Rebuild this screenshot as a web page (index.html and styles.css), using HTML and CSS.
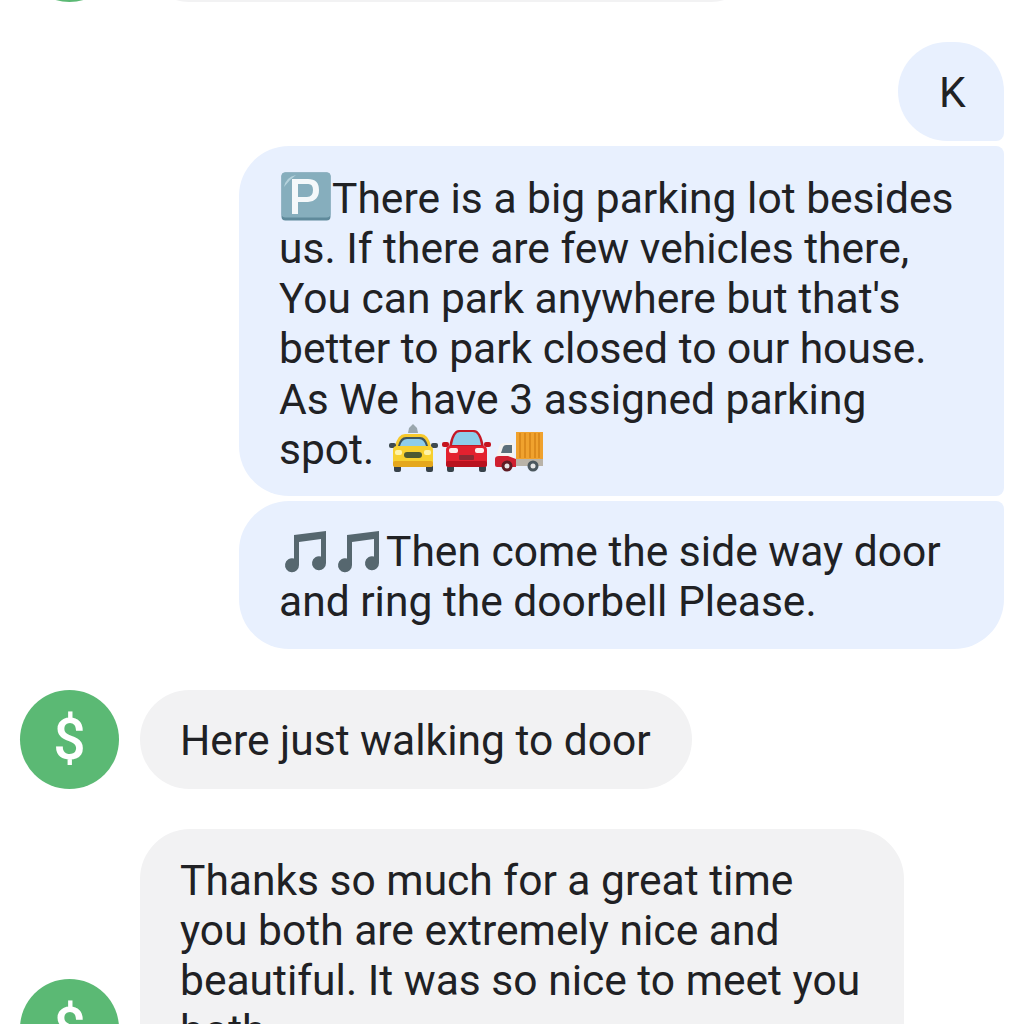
FILE: index.html
```html
<!DOCTYPE html>
<html lang="en">
<head>
<meta charset="utf-8">
<title>Messages</title>
<link rel="stylesheet" href="styles.css">
</head>
<body>
<main class="thread">
  <div class="sliver">
    <div class="row-in">
      <div class="avatar">$</div>
      <div class="bubble in wide">&nbsp;</div>
    </div>
  </div>

  <div class="group out-group">
    <div class="bubble out only">K</div>
    <div class="bubble out first">
      <div class="msg"><svg class="emoji parking" viewBox="0 0 50 50"><rect x="0.5" y="0.5" width="49" height="48" rx="4" fill="#5f8a9b"/><rect x="0.5" y="0.5" width="49" height="45" rx="4" fill="#86aebd"/><path d="M3 15Q5 5 15 3L9 8Z" fill="#b5d2dc"/><path d="M11 42V7H27Q38 7 38 18T27 30H17V42ZM17 12V25H26Q32 25 32 18T26 12Z" fill="#f4f8fa"/></svg>There is a big parking lot besides<br>us. If there are few vehicles there,<br>You can park anywhere but that's<br>better to park closed to our house.<br>As We have 3 assigned parking<br>spot. <svg class="emoji cars" viewBox="0 2 156 44">
        <g>
          <path d="M20 10l1-5 4-4 4 4 1 5z" fill="#9aa7ae"/>
          <path d="M7 23Q10 11 17 11H33Q40 11 43 23Z" fill="#f7c92c"/>
          <path d="M10 23Q12 14 18 14H32Q38 14 40 23Z" fill="#3e5560"/>
          <path d="M12 23Q14 16 19 16H31Q36 16 38 23Z" fill="#8fcdea"/>
          <rect x="1" y="20" width="7" height="5" rx="2" fill="#3e4a50"/>
          <rect x="43" y="20" width="7" height="5" rx="2" fill="#3e4a50"/>
          <rect x="6" y="41" width="7" height="8" rx="2" fill="#37424a"/>
          <rect x="38" y="41" width="7" height="8" rx="2" fill="#37424a"/>
          <path d="M5 27Q5 23 9 23H41Q45 23 45 27V41Q45 44 41 44H9Q5 44 5 41Z" fill="#f7d02f"/>
          <rect x="5" y="38" width="40" height="6" rx="2" fill="#e5a71c"/>
          <rect x="16" y="29" width="18" height="6" rx="3" fill="#4d5a32"/>
          <rect x="7" y="27" width="7" height="5" rx="2" fill="#fff3a8"/>
          <rect x="36" y="27" width="7" height="5" rx="2" fill="#fff3a8"/>
        </g>
        <g transform="translate(53)">
          <path d="M8 24Q11 7 18 7H33Q40 7 43 24Z" fill="#c51826"/>
          <path d="M11 22Q13 9 19 9H32Q38 9 40 22Z" fill="#8fcdea"/>
          <rect x="1" y="19" width="7" height="5" rx="2" fill="#c4141f"/>
          <rect x="43" y="19" width="7" height="5" rx="2" fill="#c4141f"/>
          <rect x="6" y="42" width="7" height="7" rx="2" fill="#37424a"/>
          <rect x="38" y="42" width="7" height="7" rx="2" fill="#37424a"/>
          <path d="M5 27Q5 23 9 23H42Q46 23 46 27V41Q46 44 42 44H9Q5 44 5 41Z" fill="#e3212f"/>
          <rect x="5" y="38" width="41" height="6" rx="2" fill="#b9121f"/>
          <rect x="8" y="25" width="9" height="5" rx="2" fill="#fdeeee"/>
          <rect x="34" y="25" width="9" height="5" rx="2" fill="#fdeeee"/>
          <rect x="18" y="32" width="15" height="5" rx="1" fill="#8c2a33"/>
        </g>
        <g transform="translate(106)">
          <rect x="22" y="9" width="27" height="27" fill="#f0a22e"/>
          <path d="M26 10v25M31 10v25M36 10v25M41 10v25M45 10v25" stroke="#d58418" stroke-width="1.5"/>
          <rect x="22" y="36" width="27" height="7" fill="#b9b3a8"/>
          <path d="M2 34L5 24Q6 20 10 20H20V38H2Z" fill="#f5f3f1"/>
          <path d="M7 30L9 24Q10 22 12 22H18V30Z" fill="#5c6f7a"/>
          <path d="M1 36Q1 33 5 33H14L22 36V44H3Q1 44 1 42Z" fill="#cf2030"/>
          <circle cx="13" cy="43" r="5.500" fill="#5f1c24"/>
          <circle cx="13" cy="43" r="2.500" fill="#e6e6e6"/>
          <circle cx="39" cy="43" r="5.500" fill="#4b575e"/>
          <circle cx="39" cy="43" r="2.500" fill="#e6e6e6"/>
        </g>
      </svg></div>
    </div>
    <div class="bubble out last">
      <div class="msg"><svg class="emoji notes" viewBox="0 0 46 46"><path d="M11 7L43 3V35A7 7 0 1 1 38 28.500V11L16 14V37A7 7 0 1 1 11 30.500Z" fill="#56676f"/></svg><svg class="emoji notes" viewBox="0 0 46 46"><path d="M11 7L43 3V35A7 7 0 1 1 38 28.500V11L16 14V37A7 7 0 1 1 11 30.500Z" fill="#56676f"/></svg>Then come the side way door<br>and ring the doorbell Please.</div>
    </div>
  </div>

  <div class="row-in single">
    <div class="avatar">$</div>
    <div class="bubble in short">Here just walking to door</div>
  </div>

  <div class="row-in multi">
    <div class="avatar">$</div>
    <div class="bubble in long">Thanks so much for a great time<br>you both are extremely nice and<br>beautiful. It was so nice to meet you<br>both</div>
  </div>
</main>
</body>
</html>
```
FILE: styles.css
```css
* { box-sizing: border-box; }
html, body {
  margin: 0;
  height: 1024px;
  overflow: hidden;
  background: #fff;
}
.thread {
  display: flex;
  flex-direction: column;
  padding: 0 20px;
  font-family: Roboto, "Liberation Sans", sans-serif;
  font-size: 42.55px;
  line-height: 50.3px;
  color: #202124;
}
.sliver {
  height: 2px;
  overflow: hidden;
  display: flex;
  flex-direction: column;
  justify-content: flex-end;
  flex: none;
}
.row-in {
  display: flex;
  align-items: flex-end;
  gap: 21px;
  flex: none;
}
.row-in.single { margin-top: 41px; }
.row-in.multi { margin-top: 40px; }
.avatar {
  width: 99px;
  height: 99px;
  flex: none;
  border-radius: 50%;
  background: #5bb974;
  color: #fff;
  font-size: 57px;
  font-weight: 500;
  line-height: 99px;
  text-align: center;
}
.bubble {
  padding: 25.5px 40px 25px;
  border-radius: 50px;
}
.bubble.in { background: #f2f2f3; }
.bubble.wide { width: 620px; height: 99px; }
.bubble.short { height: 99px; padding-top: 26px; padding-right: 41px; padding-bottom: 22px; }
.bubble.long { padding-top: 26.5px; padding-bottom: 21.5px; padding-right: 44px; }
.group {
  display: flex;
  flex-direction: column;
  align-items: flex-end;
  gap: 5px;
  margin-top: 40px;
  flex: none;
}
.bubble.out { background: #e8f0fe; }
.bubble.only { width: 106px; height: 99px; padding-left: 41px; padding-right: 0; border-bottom-right-radius: 8px; }
.bubble.first {
  width: 765px;
  height: 350px;
  border-top-right-radius: 8px;
  border-bottom-right-radius: 8px;
}
.bubble.last {
  width: 765px;
  height: 148px;
  padding-top: 26px;
  border-top-right-radius: 8px;
}
.emoji { display: inline-block; }
.parking { width: 50px; height: 50px; margin: 0 1px 0 2px; vertical-align: -9px; }
.cars { width: 156px; height: 44px; vertical-align: -5px; margin-left: 3px; overflow: visible; }
.notes { width: 46px; height: 46px; vertical-align: -8px; margin-left: 4px; }
.notes + .notes { margin-left: 7px; margin-right: 4px; }
```
